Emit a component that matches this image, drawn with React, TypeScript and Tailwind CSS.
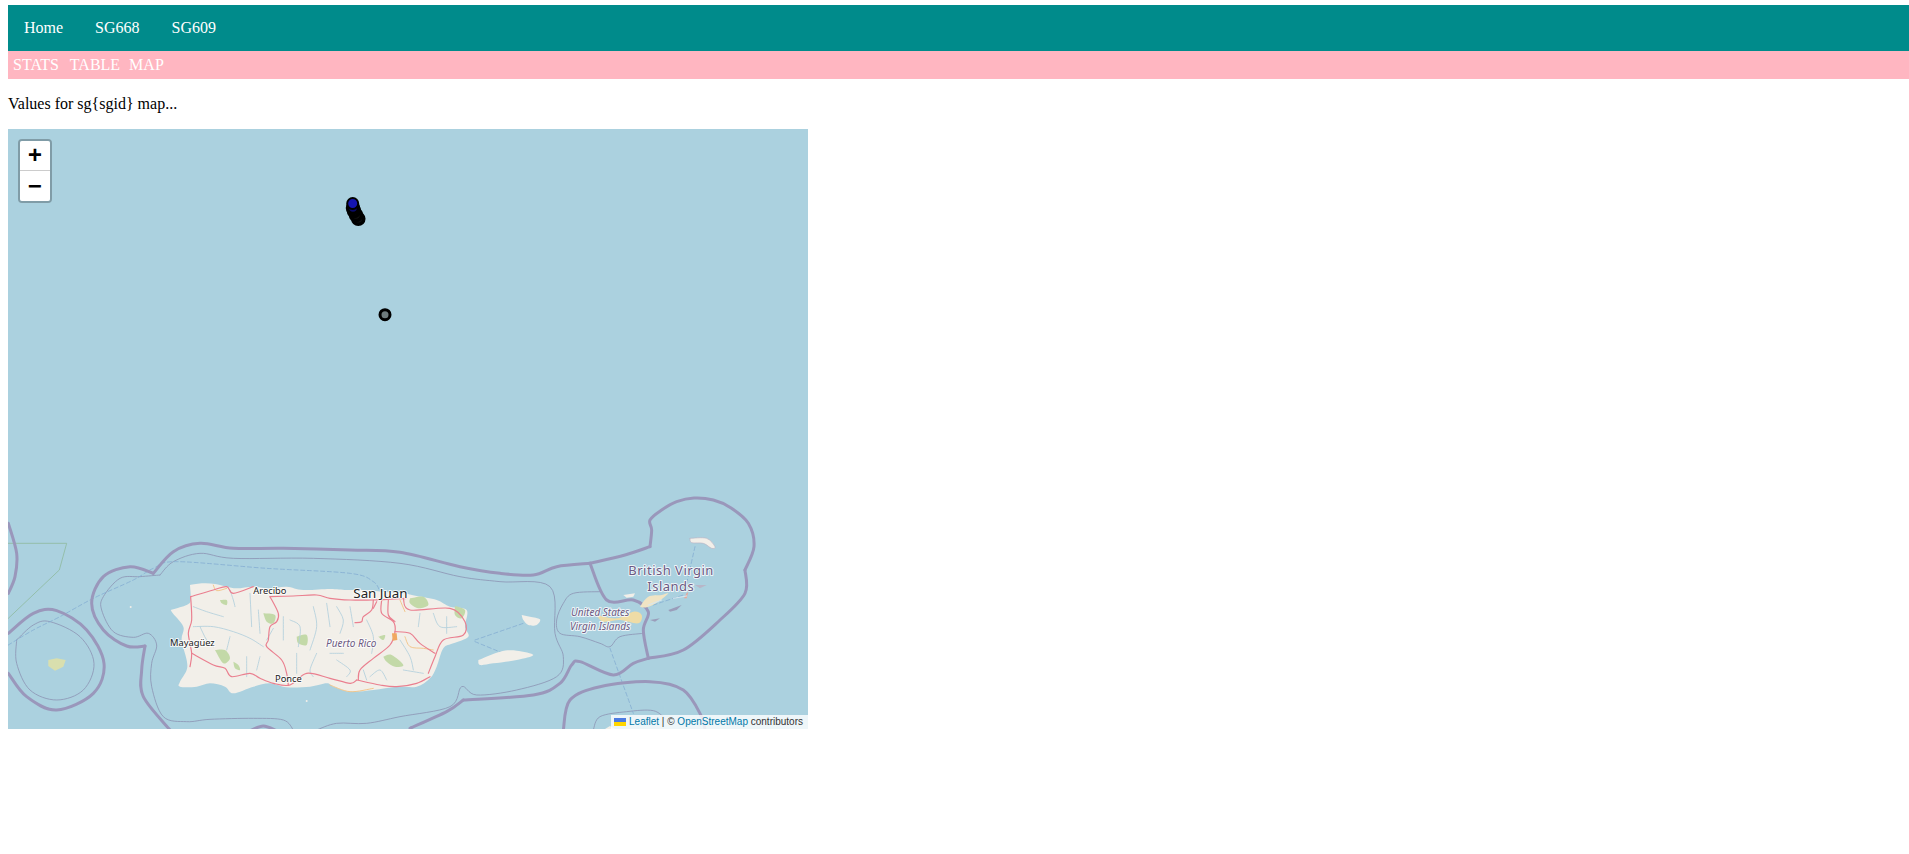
// catmull-rom through the traced points
const smooth = (pts: string) => {
  const p = pts.trim().split(/\s+/).map((s) => s.split(',').map(Number))
  let d = `M${p[0][0]} ${p[0][1]}`
  for (let i = 0; i < p.length - 1; i++) {
    const a = p[i - 1] ?? p[i]
    const b = p[i]
    const c = p[i + 1]
    const e = p[i + 2] ?? c
    d += ` C${b[0] + (c[0] - a[0]) / 6} ${b[1] + (c[1] - a[1]) / 6} ${c[0] - (e[0] - b[0]) / 6} ${c[1] - (e[1] - b[1]) / 6} ${c[0]} ${c[1]}`
  }
  return d
}

// all traced in 3x units, see the group transform below
const BORDERS = [
  '460,160 520,95 600,70 700,85 850,85 1050,90 1200,97 1380,140 1500,160 1600,165 1670,140 1770,130',
  '1770,130 1875,105 1950,80',
  '1950,80 1955,30 1950,0 1985,-30 2030,-55 2082,-66 2140,-60 2192,-37 2245,10 2262,80 2235,150',
  '2235,150 2235,220 2160,300 2050,390 1945,415',
  '1945,415 1900,430 1840,465 1740,425 1715,435 1680,490 1600,525 1390,540',
  '1390,540 1340,575 1230,625',
  '460,160 390,140 310,170 275,250 310,330 380,378 435,378',
  '435,378 425,450 430,530 510,630',
  '1770,130 1820,240 1900,240 1945,275 1930,330 1945,415',
  '1690,630 1710,540 1800,500 1950,485 2050,510 2105,590 2115,630',
  '25,340 100,280 170,272 260,330 312,430 280,520 170,570 80,530 25,460',
  '25,10 50,100 45,170 25,220',
  '750,632 790,618 830,632',
]
const THIN = [
  '50,360 100,315 150,305 240,350 282,430 250,510 170,540 90,510 50,430 50,360',
  '480,165 520,125 600,100 700,115 940,115 1200,130 1380,170 1500,185 1650,200 1665,340 1690,410 1670,470 1550,510 1430,525 1385,500 1350,560 1200,590 1100,610 1010,610 950,630',
  '480,165 420,170 360,175 310,230 305,270 340,335 400,352 445,340 470,375 455,430 455,500 490,590 560,605 630,598 760,595 850,600 880,630',
  '1800,215 1720,220 1690,250 1670,300 1680,340 1740,350 1800,370 1830,380 1860,350 1930,340',
  '1780,630 1800,590 1880,575 1960,572 2000,600',
]
const DASHED = [
  '25,375 100,330 180,290 280,235 400,180 460,145 530,125 800,145 1050,160 1120,185 1140,215',
  '1425,360 1570,310',
  '1425,365 1510,400',
  '1830,385 1900,580',
  '2085,80 2060,190',
  '1960,255 2050,225',
]
const COAST =
  '570,195 610,190 645,192 680,200 710,205 760,200 810,205 860,200 910,210 990,207 1040,210 1090,210 1150,215 1210,220 1250,228 1310,240 1350,260 1400,270 1395,320 1405,350 1360,370 1330,385 1310,440 1290,475 1250,500 1190,500 1120,510 1050,515 1000,500 980,490 930,500 860,502 810,490 760,500 700,520 675,500 630,490 590,500 540,500 540,485 560,450 560,420 545,360 550,320 515,275 520,268 560,255 572,240 570,195'
const ROADS = [
  '572,230 640,210 680,200 700,220 760,200',
  '572,230 575,300 565,340 575,400 570,440',
  '575,400 640,435 675,445 695,470 750,460 780,475 820,490 870,495 920,460 990,475 1050,490 1070,480',
  '810,230 880,228 950,225 990,235 1050,240 1120,240 1220,235',
  '810,230 835,280 830,305 810,320 805,360 800,380 845,420 860,460 865,495',
  '1120,240 1115,270 1090,290 1085,305 1065,308',
  '1145,240 1145,280 1180,305 1185,335 1170,375 1120,415 1080,450 1075,480',
  '1165,240 1165,285 1185,305',
  '1130,245 1120,265',
  '1210,235 1230,270 1350,265 1395,305 1390,345 1330,360 1305,410 1285,460',
  '1185,335 1230,340 1260,370 1305,400',
  '1070,480 1140,495 1190,500 1250,490 1290,470',
]
const MINOR = [
  '990,495 1050,515 1120,505',
  '1215,350 1230,380 1270,385 1300,390',
  '640,195 650,212 680,205',
  '1200,240 1215,275',
]
// crop A, origin 510,150
const RIVERS_A = [
  '70,110 110,125 160,140',
  '70,170 130,170 190,185 240,205 280,230',
  '180,60 190,90 195,110',
  '240,70 245,170',
  '180,200 170,240',
  '230,260 230,320',
  '265,120 270,190',
  '310,175 290,210',
  '340,140 340,210',
  '360,150 390,170 385,230',
  '430,110 440,170 420,240',
  '380,250 380,310',
  '440,250 420,300 430,320',
  '90,170 110,210 130,230',
  '270,260 260,300',
  '470,100 480,170',
]
// crop B, origin 990,150
const RIVERS_B = [
  '20,110 40,150 30,190',
  '60,110 70,170',
  '110,150 130,200 125,250',
  '270,130 265,170',
  '310,130 330,170 380,170',
  '210,210 240,260 250,300',
  '120,320 150,300 170,330',
  '20,270 60,300 50,320',
  '220,300 280,310',
  '350,140 350,190',
  '0,250 40,250',
  '100,300 110,330',
]
const GREENS = [
  '660,240 680,240 680,255 665,250',
  '790,280 825,285 820,310 800,305',
  '645,390 675,390 690,415 670,430',
  '700,425 715,435 720,450 705,445',
  '890,350 920,345 920,375 895,370',
  '1150,410 1175,405 1210,435 1185,440 1160,425',
  '1230,235 1270,230 1285,255 1255,265 1230,250',
  '1135,350 1155,345 1150,360',
  '1365,258 1395,270 1385,295 1365,285',
]

const LABEL = { fontFamily: '"Noto Sans", sans-serif', paintOrder: 'stroke' as const, stroke: '#ffffff', strokeOpacity: 0.8, strokeLinejoin: 'round' as const }

function MapDrawing() {
  return (
    <svg viewBox="8 129 800 600" className="block h-[600px] w-[800px]">
      <rect x="8" y="129" width="800" height="600" fill="#abd1df" />
      <g transform="translate(0 520) scale(0.33333)" fill="none" strokeLinejoin="round" strokeLinecap="round">
        <path d="M25 70 L200 70 L178 150 L25 295" stroke="#8fbba0" strokeWidth="2.5" />
        {THIN.map((d) => <path key={d} d={smooth(d)} stroke="#8d95b5" strokeWidth="2.5" />)}
        {DASHED.map((d) => <path key={d} d={smooth(d)} stroke="#86aed2" strokeWidth="2.5" strokeDasharray="12 8" />)}
        {BORDERS.map((d) => <path key={d} d={smooth(d)} stroke="#9a97bb" strokeWidth="9" />)}

        <path d={smooth(COAST)} fill="#f2efe9" />
        <polygon fill="#d9dfae" points="145,420 170,415 197,420 190,440 165,452 145,438" />
        <path fill="#f2efe9" d={smooth('1435,420 1500,395 1550,392 1600,405 1550,420 1480,430 1440,435 1435,420')} />
        <path fill="#f2efe9" d={smooth('1565,285 1590,290 1620,298 1610,315 1585,315 1570,300 1565,285')} />
        <path fill="#f2efe9" stroke="#b9b4c4" strokeWidth="2" d={smooth('2070,55 2120,55 2145,80 2135,85 2110,70 2075,68 2070,55')} />
        <path fill="#f0e4c4" d={smooth('1920,260 1945,230 1985,225 2005,220 1975,245 1940,262 1920,260')} />
        <path fill="#efdca6" d={smooth('1790,285 1850,295 1900,275 1925,285 1915,310 1860,300 1810,305 1790,285')} />
        <polygon fill="#f2efe9" points="1870,225 1905,220 1900,230 1880,233" />
        <polygon fill="#b8b6c8" points="2085,195 2120,195 2100,205" />
        <polygon fill="#e8a79a" points="2060,220 2065,215 2060,235 2052,235" />
        <polygon fill="#9a9dba" points="1950,300 1980,295 1965,305" />
        <polygon fill="#9a9dba" points="2005,270 2045,255 2030,270 2010,275" />
        <polygon fill="#f2efe9" points="1810,630 1830,618 1850,630" />
        <path d="M1945,255 L1985,240 M2020,235 L2060,228" stroke="#d7e7f0" strokeWidth="3" />
        <circle cx="392" cy="261" r="3" fill="#f2efe9" />
        <circle cx="920" cy="543" r="3" fill="#f2efe9" />

        {GREENS.map((p) => <path key={p} d={smooth(p + ' ' + p.split(' ')[0])} fill="#c3d9a8" />)}
        <g transform="translate(510 150)">
          {RIVERS_A.map((d) => <path key={d} d={smooth(d)} stroke="#b1cfdc" strokeWidth="2.5" />)}
        </g>
        <g transform="translate(990 150)">
          {RIVERS_B.map((d) => <path key={d} d={smooth(d)} stroke="#b1cfdc" strokeWidth="2.5" />)}
        </g>
        {MINOR.map((d) => <path key={d} d={smooth(d)} stroke="#f2bf7c" strokeWidth="2.5" />)}
        {ROADS.map((d) => <path key={d} d={smooth(d)} stroke="#ea7f8f" strokeWidth="3.5" />)}
        <polygon points="1176,340 1190,340 1192,360 1178,362" fill="#f0a860" />

        <g style={LABEL} fill="#222222" strokeWidth="6">
          <text x="760" y="222" fontSize="28">Arecibo</text>
          <text x="1060" y="233" fontSize="40">San Juan</text>
          <text x="510" y="378" fontSize="28">Mayagüez</text>
          <text x="825" y="487" fontSize="28">Ponce</text>
        </g>
        <g style={LABEL} fill="#6c5a82" strokeWidth="6">
          <text x="978" y="380" fontSize="30" fontStyle="italic">Puerto Rico</text>
          <text x="1885" y="165" fontSize="39" letterSpacing="1.5">British Virgin</text>
          <text x="1942" y="213" fontSize="39" letterSpacing="1.5">Islands</text>
          <text x="1713" y="288" fontSize="30" fontStyle="italic">United States</text>
          <text x="1710" y="330" fontSize="30" fontStyle="italic">Virgin Islands</text>
        </g>
      </g>

      {/* track points */}
      <g stroke="#000000" strokeWidth="3.5">
        <circle cx="358.3" cy="218.8" r="5.5" fill="#111111" />
        <circle cx="356" cy="215" r="5.5" fill="#111111" />
        <circle cx="354" cy="211" r="5.5" fill="#111133" />
        <circle cx="353" cy="208" r="5.5" fill="#0a0a66" />
        <circle cx="352.7" cy="203.5" r="5.5" fill="#1515b0" strokeWidth="2" />
        <circle cx="385" cy="314.7" r="5" fill="#6e7a7c" strokeWidth="3" />
      </g>
    </svg>
  )
}

export default function App() {
  return (
    <div className="min-h-[854px] bg-white pl-2 pt-[5px] font-['Liberation_Serif',serif] text-base leading-[18px] text-black">
      <nav className="flex bg-[#008b8b] text-white">
        <a className="px-4 py-[14px]">Home</a>
        <a className="px-4 py-[14px]">SG668</a>
        <a className="px-4 py-[14px]">SG609</a>
      </nav>
      <div className="flex bg-[#ffb6c1] px-[5px] py-[5px] text-white">
        <a className="mr-[11px]">STATS</a>
        <a className="mr-[9px]">TABLE</a>
        <a>MAP</a>
      </div>
      <p className="my-4">Values for sg{'{sgid}'} map...</p>

      <div className="relative h-[600px] w-[800px] overflow-hidden">
        <MapDrawing />

        <div className="absolute left-[10px] top-[10px] w-[34px] overflow-hidden rounded border-2 border-[rgba(0,0,0,0.25)] bg-clip-padding font-['Liberation_Mono',monospace]">
          <div className="flex h-[30px] w-[30px] items-center justify-center border-b border-[#cccccc] bg-white pt-[3px] text-[24px] font-bold leading-[30px]">+</div>
          <div className="flex h-[30px] w-[30px] items-center justify-center bg-white pt-[3px] text-[24px] font-bold leading-[30px]">−</div>
        </div>

        <div className="absolute bottom-0 right-0 flex h-[14px] items-center bg-[rgba(255,255,255,0.8)] pl-[3px] pr-[5px] font-['Liberation_Sans',sans-serif] text-[10px] leading-[14px] text-[#333333]">
          <svg width="12" height="8" viewBox="0 0 12 8" className="mr-[3px]">
            <rect width="12" height="4" fill="#4C7BE1" />
            <rect y="4" width="12" height="4" fill="#FFD500" />
          </svg>
          <a className="text-[#0078a8]">Leaflet</a>
          <span className="whitespace-pre"> | © </span>
          <a className="text-[#0078a8]">OpenStreetMap</a>
          <span className="whitespace-pre"> contributors</span>
        </div>
      </div>
    </div>
  )
}
